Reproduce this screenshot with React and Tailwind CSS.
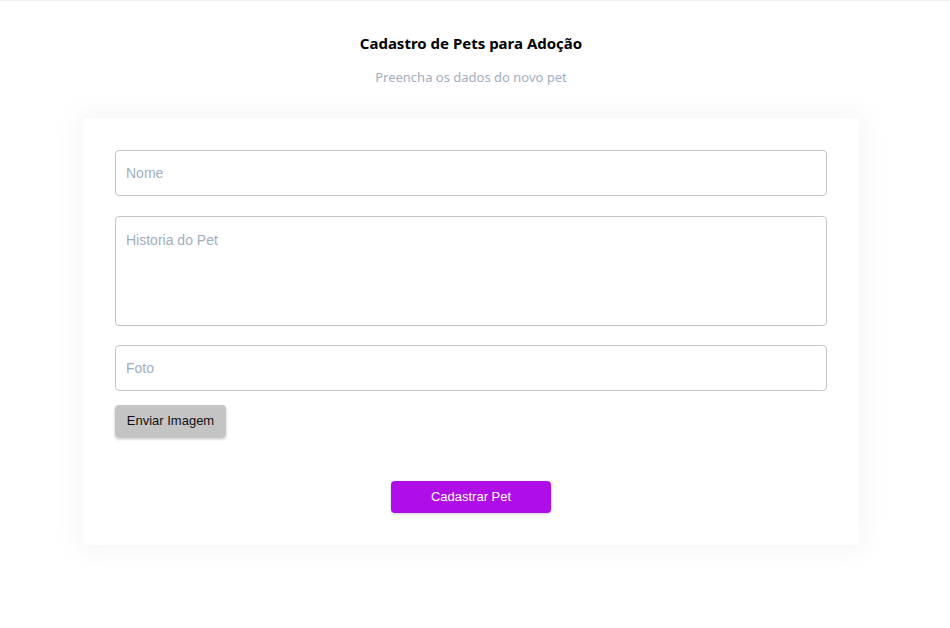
import React from "react";

export default function App() {
  return (
    <div className="min-h-[628px] bg-white border-t border-[#f0f0f0] font-['Liberation_Sans',Arial,sans-serif]">
      <div className="w-[942px]">
        <div className="flex flex-col items-center pt-[32px]">
          <h1 className="text-[15px] leading-[20px] font-bold text-black font-['Noto_Sans',sans-serif]">
            Cadastro de Pets para Adoção
          </h1>
          <p className="mt-[15px] text-[13px] leading-[18px] text-[#a0aec0] font-['Noto_Sans',sans-serif]">
            Preencha os dados do novo pet
          </p>
        </div>
        <div className="mx-auto mt-[32px] w-[776px] bg-white rounded-[3px] shadow-[0_0_24px_8px_rgba(0,0,0,0.035)] px-[32px] pt-[32px] pb-[32px]">
          <input
            placeholder="Nome"
            className="block w-full h-[46px] rounded-[4px] border border-[#c4c4c4] px-[10px] text-[14px] text-gray-800 placeholder:text-[#a0aec0] outline-none"
          />
          <textarea
            placeholder="Historia do Pet"
            className="block mt-[20px] w-full h-[110px] resize-none rounded-[4px] border border-[#c4c4c4] px-[10px] pt-[14px] text-[14px] leading-[18px] text-gray-800 placeholder:text-[#a0aec0] outline-none"
          />
          <input
            placeholder="Foto"
            className="block mt-[19px] w-full h-[46px] rounded-[4px] border border-[#c4c4c4] px-[10px] text-[14px] text-gray-800 placeholder:text-[#a0aec0] outline-none"
          />
          <button className="mt-[14px] h-[32px] w-[111px] rounded-[4px] bg-[#c4c4c4] text-[13px] text-[#111] shadow-[0_2px_3px_rgba(0,0,0,0.25)]">
            Enviar Imagem
          </button>
          <div className="flex justify-center mt-[44px]">
            <button className="h-[32px] w-[160px] rounded-[4px] bg-[#b00ee8] text-[13px] text-white shadow-[0_1px_3px_rgba(0,0,0,0.2)]">
              Cadastrar Pet
            </button>
          </div>
        </div>
      </div>
    </div>
  );
}
